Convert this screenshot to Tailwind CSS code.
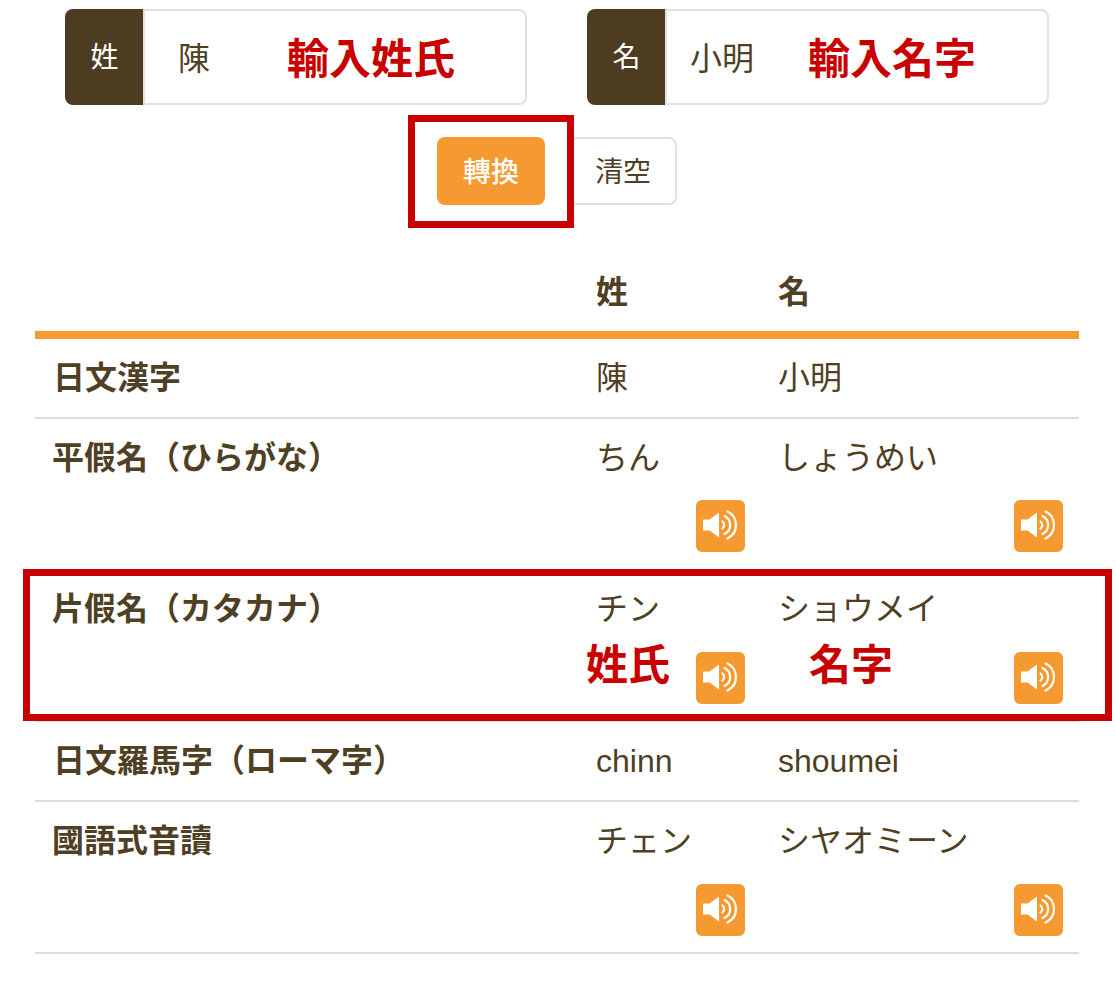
<!DOCTYPE html>
<html lang="ja">
<head>
<meta charset="UTF-8" />
<title>姓名轉換</title>
<script src="https://cdn.jsdelivr.net/npm/@tailwindcss/browser@4"></script>
</head>
<body class="bg-white text-[#4f3f24] font-['Liberation_Sans','Noto_Sans_CJK_JP',sans-serif]">
<div class="relative w-[1116px] h-[1004px] overflow-hidden pt-[9px]">

    <!-- name inputs -->
    <div class="flex gap-[60px] pl-[65px]">
        <div class="flex w-[462px] h-[96px]">
            <span class="w-[78px] shrink-0 pt-[2px] pl-[1px] flex items-center justify-center rounded-l-lg bg-[#4d3c20] text-white text-[28px]">姓</span>
            <input readonly value="陳" class="flex-1 min-w-0 pl-[33px] pt-[4px] text-[32px] outline-none border-2 border-[#e4e0dc] rounded-r-lg" />
        </div>
        <div class="flex w-[462px] h-[96px]">
            <span class="w-[78px] shrink-0 pt-[2px] pl-[1px] flex items-center justify-center rounded-l-lg bg-[#4d3c20] text-white text-[28px]">名</span>
            <input readonly value="小明" class="flex-1 min-w-0 pl-[23px] pt-[4px] text-[32px] outline-none border-2 border-[#e4e0dc] rounded-r-lg" />
        </div>
    </div>

    <!-- actions -->
    <div class="flex justify-center gap-[24px] mt-[32px] pr-[2px]">
        <button class="w-[108px] h-[68px] pt-[3px] rounded-lg bg-[#f59a30] text-white text-[28px] font-medium">轉換</button>
        <button class="w-[108px] h-[68px] pt-[3px] rounded-lg border-2 border-[#e4e0dc] text-[28px]">清空</button>
    </div>

    <!-- result table -->
    <div class="mx-[35px] mt-[45px] w-[1044px] text-[32px]">
        <div class="grid grid-cols-[543px_182px_319px] h-[81px] border-b-[8px] border-[#f59a30] box-content font-bold">
            <div></div>
            <div class="pl-[18px] pt-[19px] leading-[46px]">姓</div>
            <div class="pl-[18px] pt-[19px] leading-[46px]">名</div>
        </div>

        <div class="grid grid-cols-[543px_182px_319px] border-b-2 border-[#ddd] py-[16px] leading-[46px]">
            <div class="pl-[18px] font-bold">日文漢字</div>
            <div class="pl-[18px]">陳</div>
            <div class="pl-[18px]">小明</div>
        </div>

        <div class="grid grid-cols-[543px_182px_319px] border-b-2 border-[#ddd] pt-[16px] pb-[17px] leading-[46px]">
            <div class="pl-[17px] font-bold">平假名（ひらがな）</div>
            <div class="pl-[18px] pr-[15px]">
                <div>ちん</div>
                <div class="flex justify-end mt-[19px]">
                    <button class="w-[49px] h-[52px] rounded-md bg-[#f59a30]">
                        <svg viewBox="0 0 49 52" class="w-full h-full" fill="none" stroke="#fff" stroke-width="2.200" stroke-linecap="round"><path d="M7 19.500h6.500l9.500-7v25l-9.500-7H7z" fill="#fff" stroke="none"/><path d="M26.500 21.500a4.500 4.500 0 0 1 0 7"/><path d="M28.500 16a10 10 0 0 1 0 18"/><path d="M31.500 11.500a15 15 0 0 1 0 27"/></svg>
                    </button>
                </div>
            </div>
            <div class="pl-[18px] pr-[16px]">
                <div>しょうめい</div>
                <div class="flex justify-end mt-[19px]">
                    <button class="w-[49px] h-[52px] rounded-md bg-[#f59a30]">
                        <svg viewBox="0 0 49 52" class="w-full h-full" fill="none" stroke="#fff" stroke-width="2.200" stroke-linecap="round"><path d="M7 19.500h6.500l9.500-7v25l-9.500-7H7z" fill="#fff" stroke="none"/><path d="M26.500 21.500a4.500 4.500 0 0 1 0 7"/><path d="M28.500 16a10 10 0 0 1 0 18"/><path d="M31.500 11.500a15 15 0 0 1 0 27"/></svg>
                    </button>
                </div>
            </div>
        </div>

        <div class="grid grid-cols-[543px_182px_319px] border-b-2 border-[#ddd] pt-[15px] pb-[16px] leading-[46px]">
            <div class="pl-[17px] font-bold">片假名（カタカナ）</div>
            <div class="pl-[18px] pr-[15px]">
                <div>チン</div>
                <div class="flex justify-end mt-[20px]">
                    <button class="w-[49px] h-[52px] rounded-md bg-[#f59a30]">
                        <svg viewBox="0 0 49 52" class="w-full h-full" fill="none" stroke="#fff" stroke-width="2.200" stroke-linecap="round"><path d="M7 19.500h6.500l9.500-7v25l-9.500-7H7z" fill="#fff" stroke="none"/><path d="M26.500 21.500a4.500 4.500 0 0 1 0 7"/><path d="M28.500 16a10 10 0 0 1 0 18"/><path d="M31.500 11.500a15 15 0 0 1 0 27"/></svg>
                    </button>
                </div>
            </div>
            <div class="pl-[18px] pr-[16px]">
                <div>ショウメイ</div>
                <div class="flex justify-end mt-[20px]">
                    <button class="w-[49px] h-[52px] rounded-md bg-[#f59a30]">
                        <svg viewBox="0 0 49 52" class="w-full h-full" fill="none" stroke="#fff" stroke-width="2.200" stroke-linecap="round"><path d="M7 19.500h6.500l9.500-7v25l-9.500-7H7z" fill="#fff" stroke="none"/><path d="M26.500 21.500a4.500 4.500 0 0 1 0 7"/><path d="M28.500 16a10 10 0 0 1 0 18"/><path d="M31.500 11.500a15 15 0 0 1 0 27"/></svg>
                    </button>
                </div>
            </div>
        </div>

        <div class="grid grid-cols-[543px_182px_319px] border-b-2 border-[#ddd] py-[16px] leading-[46px]">
            <div class="pl-[18px] font-bold">日文羅馬字（ローマ字）</div>
            <div class="pl-[18px]">chinn</div>
            <div class="pl-[18px]">shoumei</div>
        </div>

        <div class="grid grid-cols-[543px_182px_319px] border-b-2 border-[#ddd] pt-[16px] pb-[16px] leading-[46px]">
            <div class="pl-[17px] font-bold">國語式音讀</div>
            <div class="pl-[18px] pr-[15px]">
                <div>チェン</div>
                <div class="flex justify-end mt-[20px]">
                    <button class="w-[49px] h-[52px] rounded-md bg-[#f59a30]">
                        <svg viewBox="0 0 49 52" class="w-full h-full" fill="none" stroke="#fff" stroke-width="2.200" stroke-linecap="round"><path d="M7 19.500h6.500l9.500-7v25l-9.500-7H7z" fill="#fff" stroke="none"/><path d="M26.500 21.500a4.500 4.500 0 0 1 0 7"/><path d="M28.500 16a10 10 0 0 1 0 18"/><path d="M31.500 11.500a15 15 0 0 1 0 27"/></svg>
                    </button>
                </div>
            </div>
            <div class="pl-[18px] pr-[16px]">
                <div>シヤオミーン</div>
                <div class="flex justify-end mt-[20px]">
                    <button class="w-[49px] h-[52px] rounded-md bg-[#f59a30]">
                        <svg viewBox="0 0 49 52" class="w-full h-full" fill="none" stroke="#fff" stroke-width="2.200" stroke-linecap="round"><path d="M7 19.500h6.500l9.500-7v25l-9.500-7H7z" fill="#fff" stroke="none"/><path d="M26.500 21.500a4.500 4.500 0 0 1 0 7"/><path d="M28.500 16a10 10 0 0 1 0 18"/><path d="M31.500 11.500a15 15 0 0 1 0 27"/></svg>
                    </button>
                </div>
            </div>
        </div>
    </div>

    <!-- red annotations drawn over the page -->
    <div class="absolute left-[408px] top-[115px] w-[166px] h-[113px] border-[7px] border-[#c80000]"></div>
    <div class="absolute left-[23px] top-[569px] w-[1089px] h-[152px] border-[7px] border-[#c80000]"></div>
    <span class="absolute left-[287px] top-[30px] text-[42px] leading-[60px] font-bold text-[#c80000]">輸入姓氏</span>
    <span class="absolute left-[808px] top-[30px] text-[42px] leading-[60px] font-bold text-[#c80000]">輸入名字</span>
    <span class="absolute left-[586px] top-[636px] text-[42px] leading-[60px] font-bold text-[#c80000]">姓氏</span>
    <span class="absolute left-[809px] top-[636px] text-[42px] leading-[60px] font-bold text-[#c80000]">名字</span>
</div>
</body>
</html>
